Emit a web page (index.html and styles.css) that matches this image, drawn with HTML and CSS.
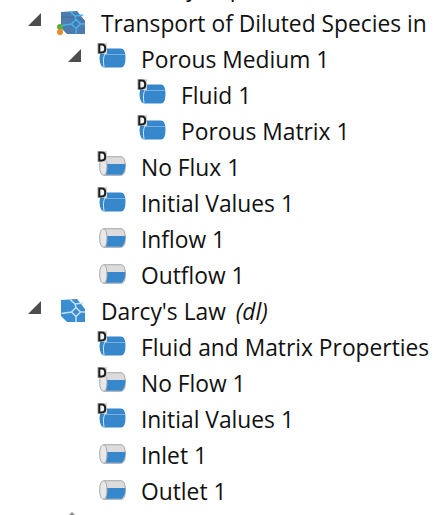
FILE: index.html
```html
<!DOCTYPE html>
<html>
<head>
    <title>Model Builder Tree</title>
    <link rel="stylesheet" href="styles.css">
</head>
<body>
    <svg class="defs" width="0" height="0">
        <defs>
            <symbol id="d-tag" viewBox="0 0 10 11">
                <rect x="0" y="0" width="10" height="11" fill="#d2d2d2"/>
                <path d="M2.300 1.600h2.700q3.200 0 3.200 3.900t-3.200 3.900h-2.700z" fill="#f4f4f4" stroke="#1c1c1c" stroke-width="2"/>
            </symbol>
            <symbol id="cyl-full" viewBox="0 0 27 20">
                <path d="M7 0.500h15q4.500 0 4.500 9.500t-4.500 9.500h-17q-4-.5-4.500-9 0-4 1.500-6.500l5 1z" fill="#3687cc"/>
                <path d="M6 6q-2.500 4-1 13" fill="none" stroke="#d3e6f5" stroke-width="1"/>
                <path d="M5.500 6.500h21" stroke="#a9cfec" stroke-width=".6"/>
            </symbol>
            <symbol id="cyl-half" viewBox="0 0 27 20">
                <path d="M5 .700h17q4.300 0 4.300 9.300t-4.300 9.300h-17z" fill="#dcdcdc" stroke="#a8a8a8"/>
                <path d="M7 8h19.300q.5 6.500-3.500 10.800h-16z" fill="#3687cc"/>
                <path d="M5 .700q-4.300 0-4.300 9.300t4.300 9.300q3-1 3-9.300t-3-9.300z" fill="#e8e8e8" stroke="#a8a8a8"/>
            </symbol>
            <symbol id="cube-blue" viewBox="0 0 24 23">
                <path d="M0 1l16-1 8 10v13h-18l-6-6z" fill="#3a8dd0"/>
                <path d="M15 13m0-4.500l4.500 4.500-4.500 4.500-4.500-4.500zM15 8.500l-1-3.500-5-4.500M19.500 13h4.500M15 17.500v5.500M10.500 13l-10 1.500M14 5l8-1" fill="none" stroke="#c4e0f5" stroke-width="1.500"/>
            </symbol>
            <symbol id="cube-dark" viewBox="0 0 24 23">
                <path d="M0 1l16-1 8 10v13h-18l-6-6z" fill="#4d7cae"/>
                <path d="M0 6h14l10 4M14 6v17" fill="none" stroke="#3a6797" stroke-width=".7"/>
                <path d="M15 13m0-4.500l4.500 4.500-4.500 4.500-4.500-4.500zM15 8.500l-1-3.500-5-4.500M19.500 13h4.500M15 17.500v5.500M10.500 13l-10 1.500M14 5l8-1" fill="none" stroke="#42b4ee" stroke-width="1.500"/>
            </symbol>
        </defs>
    </svg>

    <ul class="tree">
        <li class="row level-1">
            <span class="toggle-space"></span>
            <span class="icon-box"></span>
            <span class="label label-cut">Porosity Top</span>
        </li>

        <li class="row level-1">
            <span class="toggle"></span>
            <span class="icon-box">
                <svg class="cube"><use href="#cube-dark"/></svg>
                <span class="dot dot-green"></span>
                <span class="dot dot-orange"></span>
            </span>
            <span class="label">Transport of Diluted Species in</span>
        </li>
        <li class="row level-2">
            <span class="toggle"></span>
            <span class="icon-box"><svg class="tag"><use href="#d-tag"/></svg><svg class="cyl"><use href="#cyl-full"/></svg></span>
            <span class="label">Porous Medium 1</span>
        </li>
        <li class="row level-3">
            <span class="toggle-space"></span>
            <span class="icon-box"><svg class="tag"><use href="#d-tag"/></svg><svg class="cyl"><use href="#cyl-full"/></svg></span>
            <span class="label">Fluid 1</span>
        </li>
        <li class="row level-3">
            <span class="toggle-space"></span>
            <span class="icon-box"><svg class="tag"><use href="#d-tag"/></svg><svg class="cyl"><use href="#cyl-full"/></svg></span>
            <span class="label">Porous Matrix 1</span>
        </li>
        <li class="row level-2">
            <span class="toggle-space"></span>
            <span class="icon-box"><svg class="tag"><use href="#d-tag"/></svg><svg class="cyl"><use href="#cyl-half"/></svg></span>
            <span class="label">No Flux 1</span>
        </li>
        <li class="row level-2">
            <span class="toggle-space"></span>
            <span class="icon-box"><svg class="tag"><use href="#d-tag"/></svg><svg class="cyl"><use href="#cyl-full"/></svg></span>
            <span class="label">Initial Values 1</span>
        </li>
        <li class="row level-2">
            <span class="toggle-space"></span>
            <span class="icon-box"><svg class="cyl"><use href="#cyl-half"/></svg></span>
            <span class="label">Inflow 1</span>
        </li>
        <li class="row level-2">
            <span class="toggle-space"></span>
            <span class="icon-box"><svg class="cyl"><use href="#cyl-half"/></svg></span>
            <span class="label">Outflow 1</span>
        </li>

        <li class="row level-1">
            <span class="toggle"></span>
            <span class="icon-box"><svg class="cube"><use href="#cube-blue"/></svg></span>
            <span class="label">Darcy's Law <i class="tag-name">(dl)</i></span>
        </li>
        <li class="row level-2">
            <span class="toggle-space"></span>
            <span class="icon-box"><svg class="tag"><use href="#d-tag"/></svg><svg class="cyl"><use href="#cyl-full"/></svg></span>
            <span class="label">Fluid and Matrix Properties</span>
        </li>
        <li class="row level-2">
            <span class="toggle-space"></span>
            <span class="icon-box"><svg class="tag"><use href="#d-tag"/></svg><svg class="cyl"><use href="#cyl-half"/></svg></span>
            <span class="label">No Flow 1</span>
        </li>
        <li class="row level-2">
            <span class="toggle-space"></span>
            <span class="icon-box"><svg class="tag"><use href="#d-tag"/></svg><svg class="cyl"><use href="#cyl-full"/></svg></span>
            <span class="label">Initial Values 1</span>
        </li>
        <li class="row level-2">
            <span class="toggle-space"></span>
            <span class="icon-box"><svg class="cyl"><use href="#cyl-half"/></svg></span>
            <span class="label">Inlet 1</span>
        </li>
        <li class="row level-2">
            <span class="toggle-space"></span>
            <span class="icon-box"><svg class="cyl"><use href="#cyl-half"/></svg></span>
            <span class="label">Outlet 1</span>
        </li>

        <li class="row row-last level-1">
            <span class="toggle-space"></span>
            <span class="icon-box"><span class="apex"></span></span>
        </li>
    </ul>
</body>
</html>
```

FILE: styles.css
```css
html, body { margin: 0; height: 515px; overflow: hidden; background: #fff; }
body { font-family: "Open Sans", "Noto Sans", Arial, sans-serif; font-size: 22.8px; color: #111; }
.defs { display: block; height: 0; }

.tree { list-style: none; height: 545px; margin: -30px 0 0 0; padding: 0; overflow: hidden; }
.row { display: flex; align-items: center; height: 36px; white-space: nowrap; }
.row-last { height: 5px; align-items: flex-start; }
.level-1 { padding-left: 28px; }
.level-2 { padding-left: 68px; }
.level-3 { padding-left: 108px; }

.toggle, .toggle-space { flex: none; align-self: flex-start; width: 13px; height: 13px; margin-top: 7px; }
.toggle-space { margin-top: 0; height: 1px; }
.toggle { background: #4d4d4d; clip-path: polygon(100% 0, 100% 100%, 0 100%); }

.icon-box { position: relative; flex: none; width: 60px; height: 30px; }
.row-last .icon-box { height: 5px; }
.cyl { position: absolute; left: 18px; top: 2.5px; width: 27px; height: 20px; }
.tag { position: absolute; left: 16px; top: -2px; width: 10px; height: 11px; z-index: 1; }
.cube { position: absolute; left: 20px; top: 2px; width: 24px; height: 23px; }
.dot { position: absolute; left: 16px; width: 6px; height: 6px; border-radius: 50%; }
.dot-green { top: 15px; background: #5fae3c; }
.dot-orange { top: 20px; background: #f08a24; }
.apex { position: absolute; left: 28px; top: 2px; border: 3px solid transparent; border-top: 0; border-bottom: 3px solid #8a8a8a; }

.label { position: relative; top: -1px; }
.label-cut { margin-left: 10px; }
.tag-name { margin-left: 4px; }
```
